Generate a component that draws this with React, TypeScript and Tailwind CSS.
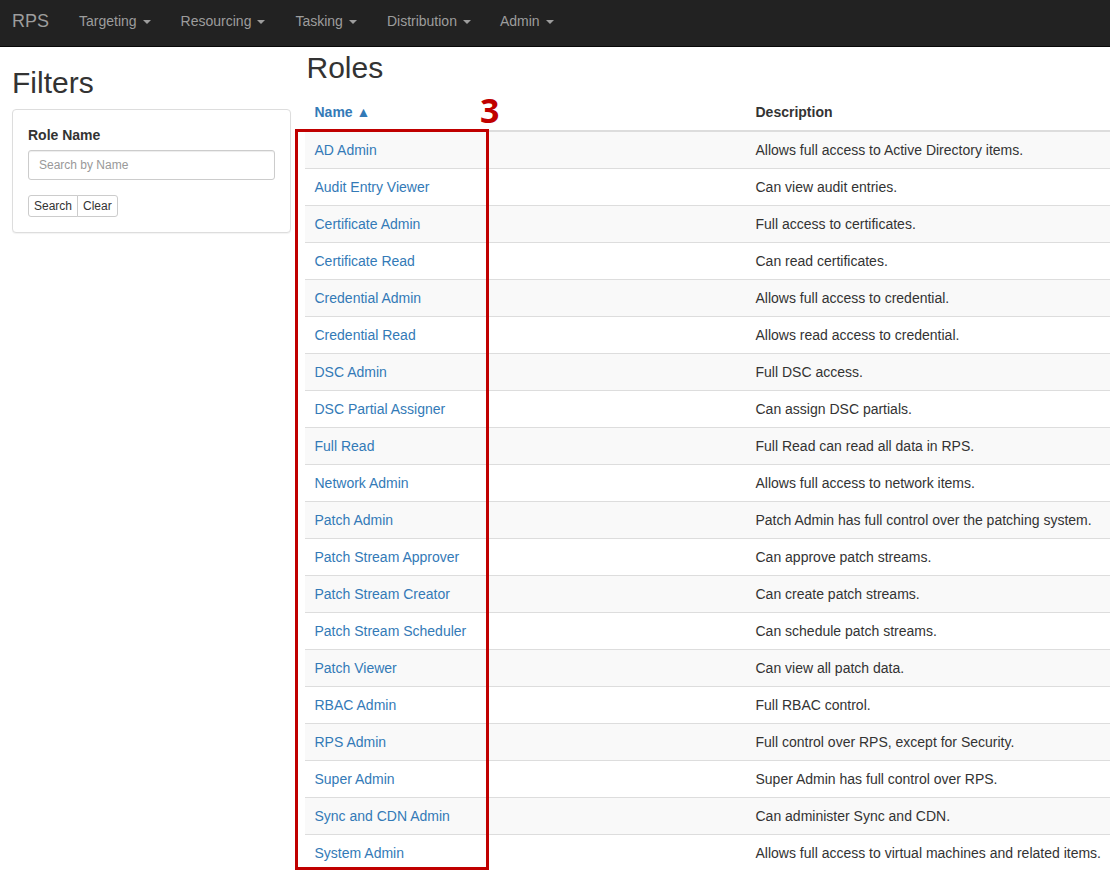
import React from "react";

const navItems = ["Targeting", "Resourcing", "Tasking", "Distribution", "Admin"];

const roles = [
  ["AD Admin", "Allows full access to Active Directory items."],
  ["Audit Entry Viewer", "Can view audit entries."],
  ["Certificate Admin", "Full access to certificates."],
  ["Certificate Read", "Can read certificates."],
  ["Credential Admin", "Allows full access to credential."],
  ["Credential Read", "Allows read access to credential."],
  ["DSC Admin", "Full DSC access."],
  ["DSC Partial Assigner", "Can assign DSC partials."],
  ["Full Read", "Full Read can read all data in RPS."],
  ["Network Admin", "Allows full access to network items."],
  ["Patch Admin", "Patch Admin has full control over the patching system."],
  ["Patch Stream Approver", "Can approve patch streams."],
  ["Patch Stream Creator", "Can create patch streams."],
  ["Patch Stream Scheduler", "Can schedule patch streams."],
  ["Patch Viewer", "Can view all patch data."],
  ["RBAC Admin", "Full RBAC control."],
  ["RPS Admin", "Full control over RPS, except for Security."],
  ["Super Admin", "Super Admin has full control over RPS."],
  ["Sync and CDN Admin", "Can administer Sync and CDN."],
  ["System Admin", "Allows full access to virtual machines and related items."],
];

export default function App() {
  return (
    <div className="relative h-[870px] w-[1110px] overflow-hidden bg-white font-['Liberation_Sans',Arial,sans-serif] text-[14px] leading-[20px] text-[#333]">
      {/* Navbar */}
      <nav className="flex h-[47px] items-start border-b border-[#080808] bg-[#222]">
        <a className="pl-3 pr-[15px] pt-[11px] text-[18px] leading-[20px] text-[#9d9d9d]">RPS</a>
        <ul className="flex">
          {navItems.map((item) => (
            <li key={item} className="flex h-[42px] items-center px-[15px] text-[#9d9d9d] last:-ml-px">
              {item}
              <span className="ml-[6px] mt-[2px] h-0 w-0 border-x-4 border-t-4 border-x-transparent border-t-[#9d9d9d]" />
            </li>
          ))}
        </ul>
      </nav>

      <div className="flex">
        {/* Filters */}
        <aside className="w-[305px] shrink-0 pl-3 pr-[14px]">
          <h2 className="mt-[19px] mb-[10px] text-[30px] leading-[33px] font-normal">Filters</h2>
          <div className="h-[124px] rounded-[4px] border border-[#ddd] bg-white px-[15px] pt-[15px] shadow-[0_1px_1px_rgba(0,0,0,0.05)]">
            <label className="mb-[5px] block font-bold">Role Name</label>
            <input
              placeholder="Search by Name"
              className="block h-[30px] w-full rounded-[3px] border border-[#ccc] px-[10px] text-[12px] leading-[18px] shadow-[inset_0_1px_1px_rgba(0,0,0,0.075)] outline-none placeholder:text-[#999]"
            />
            <div className="mt-[15px] flex">
              <button className="h-[22px] rounded-l-[3px] border border-[#ccc] bg-white px-[5px] text-[12px] leading-[18px]">
                Search
              </button>
              <button className="-ml-px h-[22px] rounded-r-[3px] border border-[#ccc] bg-white px-[5px] text-[12px] leading-[18px]">
                Clear
              </button>
            </div>
          </div>
        </aside>

        {/* Roles */}
        <main className="min-w-0 flex-1">
          <h2 className="mt-[4px] ml-[1.5px] mb-[10px] text-[30px] leading-[33px] font-normal">Roles</h2>
          <table className="w-[830px] table-fixed border-collapse">
            <thead>
              <tr className="border-b-2 border-[#ddd]">
                <th className="w-[441px] p-2 pl-[9.5px] text-left font-bold text-[#337ab7]">Name ▲</th>
                <th className="p-2 pl-[9.5px] text-left font-bold">Description</th>
              </tr>
            </thead>
            <tbody>
              {roles.map(([name, description], i) => (
                <tr key={name} className={i % 2 === 0 ? "bg-[#f9f9f9]" : "bg-white"}>
                  <td className="border-b border-[#ddd] p-2 pl-[9.5px] text-[#337ab7]">{name}</td>
                  <td className="border-b border-[#ddd] p-2 pl-[9.5px]">{description}</td>
                </tr>
              ))}
            </tbody>
          </table>
        </main>
      </div>

      {/* Annotation */}
      <div className="absolute left-[295px] top-[129px] h-[741px] w-[194px] border-[3px] border-[#c00000]" />
      <span className="absolute left-[480px] top-[90px] font-['Open_Sans',sans-serif] text-[34px] leading-[40px] font-bold text-[#c00000]">
        3
      </span>
    </div>
  );
}
